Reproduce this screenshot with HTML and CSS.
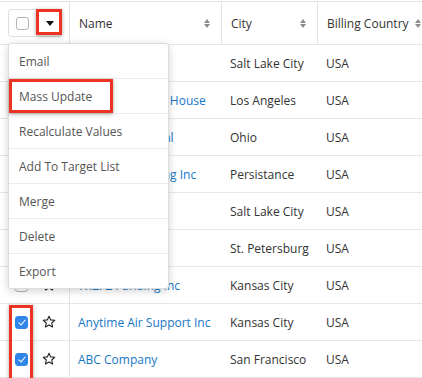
FILE: index.html
```html
<!DOCTYPE html>
<html>
<head>
<meta charset="utf-8">
<link rel="stylesheet" href="styles.css">
</head>
<body>
<div class="page">
  <div class="grid">
    <div class="row head">
      <div class="cell sel">
        <div class="group">
          <span class="cb"></span>
          <span class="caret"></span>
        </div>
      </div>
      <div class="cell hc"><span>Name</span><span class="sort"></span></div>
      <div class="cell hc"><span>City</span><span class="sort"></span></div>
      <div class="cell hc tight"><span>Billing Country</span><span class="sort"></span></div>
    </div>

    <div class="row"><div class="cell sel"><span class="cb"></span><svg class="star" viewBox="0 0 14 14"><path d="M7 1.2l1.7 3.7 4 .4-3 2.7.9 4-3.6-2.1-3.6 2.1.9-4-3-2.7 4-.4z"/></svg></div><div class="cell name"><a>Super Star Inc</a></div><div class="cell">Salt Lake City</div><div class="cell">USA</div></div>
    <div class="row"><div class="cell sel"><span class="cb"></span><svg class="star" viewBox="0 0 14 14"><path d="M7 1.2l1.7 3.7 4 .4-3 2.7.9 4-3.6-2.1-3.6 2.1.9-4-3-2.7 4-.4z"/></svg></div><div class="cell name"><a>Smallville's Tree House</a></div><div class="cell">Los Angeles</div><div class="cell">USA</div></div>
    <div class="row"><div class="cell sel"><span class="cb"></span><svg class="star" viewBox="0 0 14 14"><path d="M7 1.2l1.7 3.7 4 .4-3 2.7.9 4-3.6-2.1-3.6 2.1.9-4-3-2.7 4-.4z"/></svg></div><div class="cell name"><a>Riverside Federal</a></div><div class="cell">Ohio</div><div class="cell">USA</div></div>
    <div class="row"><div class="cell sel"><span class="cb"></span><svg class="star" viewBox="0 0 14 14"><path d="M7 1.2l1.7 3.7 4 .4-3 2.7.9 4-3.6-2.1-3.6 2.1.9-4-3-2.7 4-.4z"/></svg></div><div class="cell name"><a>Global Consulting Inc</a></div><div class="cell">Persistance</div><div class="cell">USA</div></div>
    <div class="row"><div class="cell sel"><span class="cb"></span><svg class="star" viewBox="0 0 14 14"><path d="M7 1.2l1.7 3.7 4 .4-3 2.7.9 4-3.6-2.1-3.6 2.1.9-4-3-2.7 4-.4z"/></svg></div><div class="cell name"><a>Tracker Com</a></div><div class="cell">Salt Lake City</div><div class="cell">USA</div></div>
    <div class="row"><div class="cell sel"><span class="cb"></span><svg class="star" viewBox="0 0 14 14"><path d="M7 1.2l1.7 3.7 4 .4-3 2.7.9 4-3.6-2.1-3.6 2.1.9-4-3-2.7 4-.4z"/></svg></div><div class="cell name"><a>Q.R.&amp;E. Corp</a></div><div class="cell">St. Petersburg</div><div class="cell">USA</div></div>
    <div class="row"><div class="cell sel"><span class="cb"></span><svg class="star" viewBox="0 0 14 14"><path d="M7 1.2l1.7 3.7 4 .4-3 2.7.9 4-3.6-2.1-3.6 2.1.9-4-3-2.7 4-.4z"/></svg></div><div class="cell name"><a>W.Z. Z Funding Inc</a></div><div class="cell">Kansas City</div><div class="cell">USA</div></div>
    <div class="row"><div class="cell sel"><span class="cb on"></span><svg class="star" viewBox="0 0 14 14"><path d="M7 1.2l1.7 3.7 4 .4-3 2.7.9 4-3.6-2.1-3.6 2.1.9-4-3-2.7 4-.4z"/></svg></div><div class="cell name"><a>Anytime Air Support Inc</a></div><div class="cell">Kansas City</div><div class="cell">USA</div></div>
    <div class="row"><div class="cell sel"><span class="cb on"></span><svg class="star" viewBox="0 0 14 14"><path d="M7 1.2l1.7 3.7 4 .4-3 2.7.9 4-3.6-2.1-3.6 2.1.9-4-3-2.7 4-.4z"/></svg></div><div class="cell name"><a>ABC Company</a></div><div class="cell">San Francisco</div><div class="cell">USA</div></div>
  </div>

  <ul class="menu">
    <li>Email</li>
    <li>Mass Update</li>
    <li>Recalculate Values</li>
    <li>Add To Target List</li>
    <li>Merge</li>
    <li>Delete</li>
    <li>Export</li>
  </ul>

  <div class="hl hl-caret"></div>
  <div class="hl hl-mass"></div>
  <div class="hl hl-checks"></div>
</div>
</body>
</html>
```

FILE: styles.css
```css
html, body {
  margin: 0;
  padding: 0;
  background: #fff;
}
body {
  font-family: "Open Sans", "DejaVu Sans", sans-serif;
  font-size: 12px;
  color: #333;
  width: 422px;
  height: 378px;
  overflow: hidden;
}
.page {
  position: relative;
  width: 422px;
  height: 378px;
  overflow: hidden;
  padding-top: 1px;
  box-sizing: border-box;
}
.grid {
  border-top: 1px solid #e2e2e2;
}
.row {
  display: grid;
  grid-template-columns: 70px 152px 96px 104px;
  height: 36px;
  border-bottom: 1px solid #e6e6e6;
}
.row.head {
  height: 42px;
}
.cell {
  display: flex;
  align-items: center;
  padding-left: 8px;
  white-space: nowrap;
  overflow: hidden;
}
.cell.sel {
  padding-left: 15px;
  border-right: 1px solid #e2e2e2;
  gap: 14px;
}
.head .cell {
  border-right: 1px solid #e2e2e2;
}
.head .cell:last-child {
  border-right: none;
}
.head .cell.sel {
  padding-left: 8px;
}
.hc {
  justify-content: space-between;
  padding-right: 10px;
  padding-left: 9px;
}
.hc.tight {
  justify-content: flex-start;
  gap: 6px;
}
.group {
  display: flex;
  align-items: center;
  width: 52px;
  height: 26px;
  border: 1px solid #e0e0e0;
  border-radius: 3px;
  box-sizing: content-box;
}
.group .cb {
  margin-left: 7px;
}
.caret {
  margin-left: 17px;
  width: 0;
  height: 0;
  border-left: 4px solid transparent;
  border-right: 4px solid transparent;
  border-top: 5px solid #111;
}
.cb {
  display: inline-block;
  width: 11px;
  height: 11px;
  border: 1px solid #b5b5b5;
  border-radius: 3px;
  background: #fff;
  flex: none;
  position: relative;
}
.cb.on {
  background: #2f86e8;
  border-color: #2f86e8;
}
.cb.on::after {
  content: "";
  position: absolute;
  left: 3.5px;
  top: 1px;
  width: 3px;
  height: 6px;
  border-right: 1.6px solid #fff;
  border-bottom: 1.6px solid #fff;
  transform: rotate(40deg);
}
.star {
  width: 14px;
  height: 14px;
  flex: none;
  fill: none;
  stroke: #222;
  stroke-width: 1.1;
  stroke-linejoin: round;
}
.sort {
  width: 7px;
  height: 9px;
  flex: none;
  position: relative;
}
.sort::before, .sort::after {
  content: "";
  position: absolute;
  left: 0;
  border-left: 3.5px solid transparent;
  border-right: 3.5px solid transparent;
}
.sort::before {
  top: 0;
  border-bottom: 4px solid #8c8c8c;
}
.sort::after {
  bottom: 0;
  border-top: 4px solid #8c8c8c;
}
.name a {
  color: #1777c6;
}
.menu {
  position: absolute;
  left: 8px;
  top: 43px;
  width: 159px;
  margin: 0;
  padding: 0;
  list-style: none;
  background: #fff;
  border: 1px solid #dcdcdc;
  border-radius: 3px;
  box-shadow: 0 2px 8px rgba(0,0,0,0.18);
  color: #555;
}
.menu li {
  height: 34px;
  display: flex;
  align-items: center;
  padding-left: 10px;
  border-top: 1px solid #ececec;
}
.menu li:first-child {
  border-top: none;
}
.hl {
  position: absolute;
  border: 3px solid #ef3323;
  box-shadow: 0 1px 4px rgba(0,0,0,0.35);
  box-sizing: border-box;
}
.hl-caret {
  left: 36px;
  top: 9px;
  width: 26px;
  height: 26px;
}
.hl-mass {
  left: 9px;
  top: 79px;
  width: 104px;
  height: 34px;
}
.hl-checks {
  left: 9px;
  top: 305px;
  width: 24px;
  height: 80px;
}
```
